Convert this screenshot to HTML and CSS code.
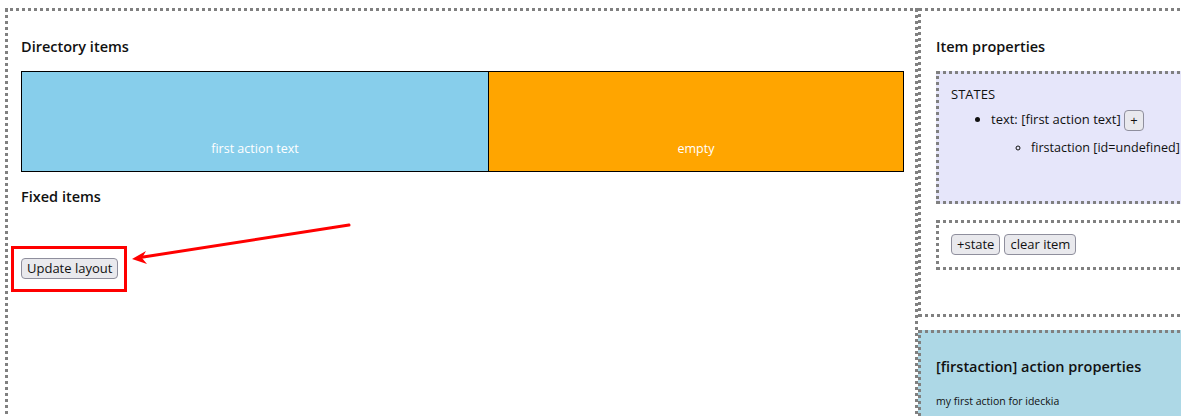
FILE: index.html
```html
<!DOCTYPE html>
<html>
<head>
<meta charset="utf-8">
<link rel="stylesheet" href="styles.css">
</head>
<body>
<div class="app">
  <section class="layout-panel">
    <h3 class="title">Directory items</h3>
    <div class="dir-grid">
      <div class="item item-blue"><span>first action text</span></div>
      <div class="item item-orange"><span>empty</span></div>
    </div>
    <h3 class="title title-fixed">Fixed items</h3>
    <div class="fixed-grid"></div>
    <button class="btn">Update layout</button>
  </section>
  <aside class="side">
    <section class="props-panel">
      <h3 class="title">Item properties</h3>
      <div class="states-box">
        <div class="states-label">STATES</div>
        <ul class="state-list">
          <li>text: [first action text] <button class="btn btn-small">+</button>
            <ul class="action-list">
              <li>firstaction [id=undefined]</li>
            </ul>
          </li>
        </ul>
      </div>
      <div class="actions-box">
        <button class="btn">+state</button>
        <button class="btn">clear item</button>
      </div>
    </section>
    <section class="action-panel">
      <h3 class="title">[firstaction] action properties</h3>
      <p class="action-desc">my first action for ideckia</p>
    </section>
  </aside>
  <svg class="annotation" width="1181" height="416" viewBox="0 0 1181 416">
    <rect x="12.5" y="247.5" width="113" height="43" fill="none" stroke="#ff0000" stroke-width="3"/>
    <line x1="349" y1="225" x2="140" y2="257.5" stroke="#ff0000" stroke-width="3" stroke-linecap="round"/>
    <path d="M132 259 L146 251 L142 258 L147 264 Z" fill="#ff0000"/>
  </svg>
</div>
</body>
</html>
```

FILE: styles.css
```css
html, body {
  margin: 0;
  padding: 0;
  background: #fff;
  overflow: hidden;
}
body {
  font-family: "Open Sans", "Noto Sans", sans-serif;
  color: #111;
  font-size: 13px;
}
.app {
  position: relative;
  display: flex;
  align-items: flex-start;
  padding: 8px 0 0 5px;
  width: 1181px;
  height: 416px;
  box-sizing: border-box;
  overflow: hidden;
}
.title {
  margin: 0;
  font-size: 14.5px;
  line-height: 20px;
  font-weight: 600;
  color: #111;
}
.layout-panel {
  width: 913px;
  height: 420px;
  box-sizing: border-box;
  border: 3px dotted #808080;
  padding: 26px 13px 0 13px;
  flex: none;
}
.dir-grid {
  display: grid;
  grid-template-columns: 468px 415px;
  margin-top: 14px;
}
.item {
  height: 101px;
  box-sizing: border-box;
  border: 1px solid #000;
  display: flex;
  align-items: flex-end;
  justify-content: center;
  padding-bottom: 13px;
  color: #fff;
  font-size: 12.5px;
  line-height: 18px;
}
.item-blue { background: #87ceeb; }
.item-orange { background: #ffa500; border-left: 0; }
.title-fixed { margin-top: 15px; }
.fixed-grid { height: 51px; }
.btn {
  font-family: inherit;
  font-size: 13px;
  line-height: 17px;
  color: #111;
  background: #e9e9ed;
  border: 1px solid #8f8f9d;
  border-radius: 4px;
  padding: 1px 5px;
  margin: 0;
  height: 21px;
  box-sizing: border-box;
}
.side {
  flex: none;
  width: 300px;
  display: flex;
  flex-direction: column;
}
.props-panel {
  border: 3px dotted #808080;
  padding: 26px 15px 44px 15px;
}
.states-box {
  margin-top: 14px;
  background: #e6e6fa;
  border: 3px dotted #808080;
  padding: 11px 12px 44px 12px;
  line-height: 18px;
}
.states-label { line-height: 18px; }
.state-list {
  margin: 6px 0 0 0;
  padding-left: 40px;
  line-height: 21px;
  white-space: nowrap;
}
.btn-small {
  padding: 1px 5px;
  vertical-align: middle;
}
.action-list {
  margin: 8px 0 0 0;
  padding-left: 40px;
  list-style-type: circle;
  line-height: 18px;
  font-size: 12.6px;
}
.actions-box {
  margin-top: 16px;
  border: 3px dotted #808080;
  padding: 11px 12px 12px 12px;
  display: flex;
  gap: 4px;
}
.action-panel {
  margin-top: 13px;
  background: #add8e6;
  border: 3px dotted #808080;
  padding: 24px 15px 20px 15px;
  height: 60px;
}
.action-desc {
  margin: 16px 0 0 0;
  font-size: 10.5px;
  line-height: 16px;
}
.annotation {
  position: absolute;
  left: 0;
  top: 0;
  pointer-events: none;
}
```
